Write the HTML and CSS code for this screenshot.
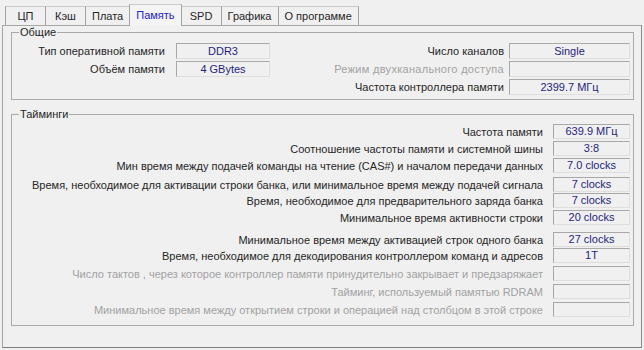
FILE: index.html
```html
<!DOCTYPE html>
<html lang="ru">
<head>
  <meta charset="UTF-8">
  <title>CPU-Z Память</title>
  <link rel="stylesheet" href="styles.css">
</head>
<body>
  <div class="cpuz">
    <div class="tabs">
      <div class="tab">ЦП</div>
      <div class="tab">Кэш</div>
      <div class="tab">Плата</div>
      <div class="tab active">Память</div>
      <div class="tab">SPD</div>
      <div class="tab">Графика</div>
      <div class="tab">О программе</div>
    </div>
    <div class="panel">
      <fieldset class="group general">
        <legend>Общие</legend>
        <div class="general-cols">
          <div class="col col-left">
            <div class="row"><span class="label">Тип оперативной памяти</span><span class="value v-short">DDR3</span></div>
            <div class="row"><span class="label">Объём памяти</span><span class="value v-short">4 GBytes</span></div>
          </div>
          <div class="col col-right">
            <div class="row"><span class="label">Число каналов</span><span class="value v-wide">Single</span></div>
            <div class="row disabled"><span class="label spaced">Режим двухканального доступа</span><span class="value v-wide"></span></div>
            <div class="row"><span class="label">Частота контроллера памяти</span><span class="value v-wide">2399.7 МГц</span></div>
          </div>
        </div>
      </fieldset>
      <fieldset class="group timings">
        <legend>Тайминги</legend>
        <div class="trow"><span class="label">Частота памяти</span><span class="value v-timing">639.9 МГц</span></div>
        <div class="trow"><span class="label">Соотношение частоты памяти и системной шины</span><span class="value v-timing">3:8</span></div>
        <div class="trow"><span class="label">Мин время между подачей команды на чтение (CAS#) и началом передачи данных</span><span class="value v-timing">7.0 clocks</span></div>
        <div class="trow mt2"><span class="label">Время, необходимое для активации строки банка, или минимальное время между подачей сигнала</span><span class="value v-timing">7 clocks</span></div>
        <div class="trow mt-1"><span class="label">Время, необходимое для предварительного заряда банка</span><span class="value v-timing">7 clocks</span></div>
        <div class="trow"><span class="label">Минимальное время активности строки</span><span class="value v-timing">20 clocks</span></div>
        <div class="trow mt5"><span class="label">Минимальное время между активацией строк одного банка</span><span class="value v-timing">27 clocks</span></div>
        <div class="trow mt-1"><span class="label">Время, необходимое для декодирования контроллером команд и адресов</span><span class="value v-timing">1T</span></div>
        <div class="trow mt1 disabled"><span class="label">Число тактов , через которое контроллер памяти принудительно закрывает и предзаряжает</span><span class="value v-timing"></span></div>
        <div class="trow mt1 disabled"><span class="label">Тайминг, используемый памятью RDRAM</span><span class="value v-timing"></span></div>
        <div class="trow mt1 disabled"><span class="label">Минимальное время между открытием строки и операцией над столбцом в этой строке</span><span class="value v-timing"></span></div>
      </fieldset>
    </div>
  </div>
</body>
</html>
```

FILE: styles.css
```css
html, body {
  margin: 0;
  padding: 0;
  background: #f0f0f0;
}
* {
  box-sizing: border-box;
}
.cpuz {
  width: 644px;
  height: 350px;
  font-family: "Liberation Sans", Arial, sans-serif;
  font-size: 11px;
  color: #262626;
  overflow: hidden;
}
/* Вкладки */
.tabs {
  display: flex;
  align-items: flex-end;
  padding: 4px 0 0 5px;
}
.tab {
  min-width: 41px;
  height: 19px;
  line-height: 18px;
  padding: 0 6px;
  text-align: center;
  white-space: nowrap;
  border: 1px solid #a3a3a3;
  border-top-color: #c9c9c9;
  border-bottom: none;
  margin-right: -1px;
  background: #f0f0f0;
}
.tab.active {
  height: 22px;
  line-height: 20px;
  margin-bottom: -1px;
  color: #2323c8;
  background: #f4f4f4;
  position: relative;
  z-index: 1;
}
.panel {
  width: 640px;
  height: 323px;
  margin-left: 2px;
  border: 1px solid #a6a6a6;
  border-right-color: #8c8c8c;
  border-bottom-color: #7f7f7f;
  padding: 0;
}
/* Группы */
.group {
  margin: 0 7px 0 8px;
  padding: 3px 3px 3px 0;
  border: 1px solid #a9a9a9;
  min-width: 0;
}
.group legend {
  margin-left: 7px;
  padding: 0 1px;
  line-height: 13px;
  color: #262626;
}
.general-cols {
  display: flex;
}
.col-left {
  width: 258px;
}
.col-right {
  flex: 1;
}
.row, .trow {
  display: flex;
  justify-content: flex-end;
  align-items: center;
  white-space: nowrap;
}
.row {
  height: 18px;
}
.col-left .row {
  gap: 11px;
}
.col-right .row {
  gap: 5px;
}
.value {
  display: block;
  text-align: center;
  color: #1f1f7c;
  border: 1px solid;
  border-color: #a8a8a8 #dedede #dedede #a8a8a8;
  background: #f0f0f0;
}
.v-short {
  width: 94px;
  height: 16px;
  line-height: 14px;
}
.v-wide {
  width: 121px;
  height: 16px;
  line-height: 14px;
}
.disabled .label {
  color: #a2a2a2;
}
.label.spaced {
  letter-spacing: 0.3px;
}
.timings {
  margin-top: 8px;
  padding: 2px 3px 7px 0;
}
.trow {
  height: 17px;
  gap: 10px;
}
.v-timing {
  width: 77px;
  height: 15px;
  line-height: 13px;
}
.mt1 { margin-top: 1px; }
.mt2 { margin-top: 2px; }
.mt5 { margin-top: 5px; }
.mt-1 { margin-top: -1px; }
```
